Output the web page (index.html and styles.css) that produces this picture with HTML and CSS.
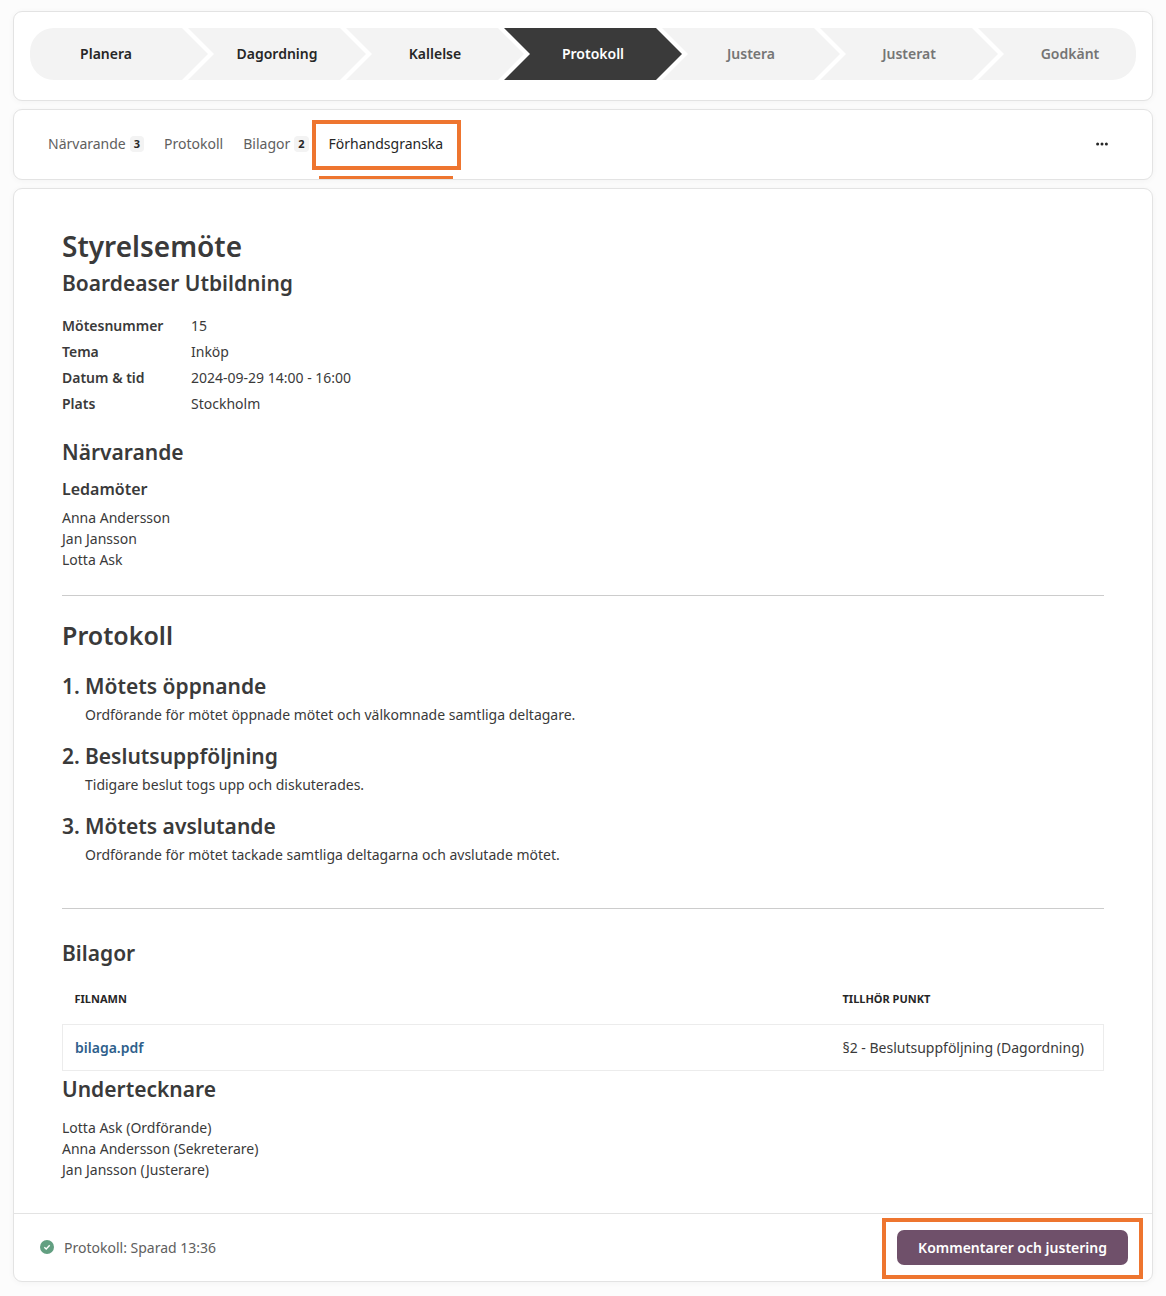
FILE: index.html
```html
<!DOCTYPE html>
<html lang="sv">
<head>
<meta charset="utf-8">
<meta name="viewport" content="width=device-width, initial-scale=1">
<title>Styrelsemöte – Protokoll</title>
<link rel="stylesheet" href="styles.css">
</head>
<body>
<div class="page">
  <nav class="card stepper" aria-label="Mötesprocess">
    <ol class="steps">
      <li class="step"><a href="#planera">Planera</a></li>
      <li class="step"><a href="#dagordning">Dagordning</a></li>
      <li class="step"><a href="#kallelse">Kallelse</a></li>
      <li class="step step-current" aria-current="step"><a href="#protokoll">Protokoll</a></li>
      <li class="step step-upcoming"><span>Justera</span></li>
      <li class="step step-upcoming"><span>Justerat</span></li>
      <li class="step step-upcoming"><span>Godkänt</span></li>
    </ol>
  </nav>

  <nav class="card tabs" aria-label="Protokoll">
    <a class="tab" href="#narvarande">Närvarande <span class="badge">3</span></a>
    <a class="tab" href="#protokoll">Protokoll</a>
    <a class="tab" href="#bilagor">Bilagor <span class="badge">2</span></a>
    <a class="tab tab-active" href="#forhandsgranska" aria-current="page">Förhandsgranska</a>
    <button class="more" type="button" aria-label="Fler val">
      <svg width="14" height="4" viewBox="0 0 14 4" fill="currentColor" aria-hidden="true">
        <circle cx="2.6" cy="2" r="1.5"/><circle cx="7" cy="2" r="1.5"/><circle cx="11.4" cy="2" r="1.5"/>
      </svg>
    </button>
  </nav>

  <main class="card">
    <article class="document">
      <h1 class="title">Styrelsemöte</h1>
      <p class="heading organisation">Boardeaser Utbildning</p>
      <dl class="facts">
        <dt>Mötesnummer</dt><dd>15</dd>
        <dt>Tema</dt><dd>Inköp</dd>
        <dt>Datum &amp; tid</dt><dd>2024-09-29 14:00 - 16:00</dd>
        <dt>Plats</dt><dd>Stockholm</dd>
      </dl>

      <section class="attendance" id="narvarande">
        <h2 class="heading">Närvarande</h2>
        <h3 class="subheading">Ledamöter</h3>
        <ul class="people">
          <li>Anna Andersson</li>
          <li>Jan Jansson</li>
          <li>Lotta Ask</li>
        </ul>
      </section>

      <section class="minutes" id="protokoll">
        <h2 class="minutes-title">Protokoll</h2>
        <ol class="items">
          <li class="item"><h3 class="item-title">Mötets öppnande</h3><p>Ordförande för mötet öppnade mötet och välkomnade samtliga deltagare.</p></li>
          <li class="item"><h3 class="item-title">Beslutsuppföljning</h3><p>Tidigare beslut togs upp och diskuterades.</p></li>
          <li class="item"><h3 class="item-title">Mötets avslutande</h3><p>Ordförande för mötet tackade samtliga deltagarna och avslutade mötet.</p></li>
        </ol>
      </section>

      <section class="attachments" id="bilagor">
        <h2 class="heading">Bilagor</h2>
        <table class="files">
          <thead><tr><th scope="col">Filnamn</th><th scope="col">Tillhör punkt</th></tr></thead>
          <tbody><tr><td><a href="#bilaga">bilaga.pdf</a></td><td>§2 - Beslutsuppföljning (Dagordning)</td></tr></tbody>
        </table>
      </section>

      <section class="signers">
        <h2 class="heading">Undertecknare</h2>
        <ul class="people">
          <li>Lotta Ask (Ordförande)</li>
          <li>Anna Andersson (Sekreterare)</li>
          <li>Jan Jansson (Justerare)</li>
        </ul>
      </section>
    </article>

    <footer class="footer">
      <p class="status">
        <svg width="14" height="14" viewBox="0 0 14 14" aria-hidden="true">
          <circle cx="7" cy="7" r="7" fill="#629f81"/>
          <path d="M4.3 7.200 6.200 9 9.700 5.300" fill="none" stroke="#fff" stroke-width="1.4"/>
        </svg>
        Protokoll: Sparad 13:36
      </p>
      <div class="action"><button class="primary" type="button">Kommentarer och justering</button></div>
    </footer>
  </main>
</div>
</body>
</html>
```
FILE: styles.css
```css
* { box-sizing: border-box; }

body {
  margin: 0;
  background: #fcfcfc;
  color: #3a3a3a;
  font: 14px/21px "Noto Sans", sans-serif;
}

h1, h2, h3, p, ol, ul, dl, dd { margin: 0; padding: 0; }
ol, ul { list-style: none; }
h1, h2, h3 { font-weight: 600; }
a { color: inherit; text-decoration: none; }
button { font: inherit; border: 0; cursor: pointer; }

.page {
  display: grid;
  gap: 8px;
  padding: 11px 13px 14px;
}

.card {
  min-width: 0;
  background: #fff;
  border: 1px solid #e3e3e3;
  border-radius: 9px;
  box-shadow: 0 1px 6px rgb(0 0 0 / 4%);
}

/* Process stepper */
.stepper { padding: 16px 16px 20px; }

.steps {
  display: grid;
  grid-template-columns: repeat(7, minmax(0, 1fr));
}

.step {
  height: 52px;
  margin-right: -20px;
  padding-bottom: 2px;
  display: flex;
  align-items: center;
  justify-content: center;
  background: #f3f3f3;
  color: #262626;
  font-weight: 600;
  clip-path: polygon(0 0, calc(100% - 26px) 0, 100% 50%, calc(100% - 26px) 100%, 0 100%, 26px 50%);
}

.step:first-child {
  padding-right: 26px;
  border-radius: 24px 0 0 24px;
  clip-path: polygon(0 0, calc(100% - 26px) 0, 100% 50%, calc(100% - 26px) 100%, 0 100%);
}

.step:last-child {
  margin-right: 0;
  padding-left: 26px;
  border-radius: 0 24px 24px 0;
  clip-path: polygon(0 0, 100% 0, 100% 100%, 0 100%, 26px 50%);
}

.step-current { background: #3a3a3a; color: #fff; }
.step-upcoming { color: #757575; }

/* Tabs */
.tabs {
  display: flex;
  min-height: 71px;
  padding: 0 39px 0 24px;
}

.tab {
  position: relative;
  display: flex;
  align-items: center;
  gap: 4px;
  padding: 0 10px 2px;
  color: #606060;
}

.tab-active { color: #262626; }

.tab-active::before {
  content: "";
  position: absolute;
  inset: 10px -8px 9px -7px;
  border: 4px solid #ee752f;
}

.tab-active::after {
  content: "";
  position: absolute;
  inset: auto 0 0;
  height: 3px;
  background: #ee752f;
}

.badge {
  padding: 0 4px;
  border-radius: 4px;
  background: #f3f3f3;
  color: #262626;
  font-size: 11px;
  font-weight: 700;
  line-height: 16px;
}

.more {
  align-self: center;
  display: flex;
  margin-left: auto;
  padding: 8px 4px 10px;
  background: none;
  color: #262626;
}

/* Minutes document */
.document { padding: 40px 48px 33px; }
.title { font-size: 28px; line-height: 34px; }
.heading { font-size: 21px; line-height: 40px; font-weight: 600; }
.subheading { margin: 5px 0 6px; font-size: 16px; line-height: 24px; }

.facts {
  display: grid;
  grid-template-columns: 129px 1fr;
  margin: 10px 0 15px;
  line-height: 26px;
}

.facts dt { font-weight: 600; }

.attendance { padding-bottom: 25px; }

.minutes {
  border: solid #cccccc;
  border-width: 1px 0;
  padding: 19px 0 43px;
}

.minutes-title { font-size: 25px; line-height: 40px; }

.items {
  display: grid;
  gap: 17px;
  margin-top: 17px;
  counter-reset: item;
}

.item {
  display: grid;
  grid-template-columns: 23px 1fr;
  row-gap: 4px;
  counter-increment: item;
}

.item::before {
  content: counter(item) ".";
  font-size: 21px;
  font-weight: 600;
  line-height: 28px;
}

.item-title { font-size: 21px; line-height: 28px; }
.item p { grid-column: 2; }

.attachments { padding-top: 24px; }

.files {
  width: 100%;
  border-collapse: collapse;
}

.files th {
  height: 51px;
  padding: 0 12px;
  color: #262626;
  font-size: 11px;
  font-weight: 700;
  text-align: left;
  text-transform: uppercase;
}

.files td { height: 46px; padding: 0 12px; }
.files th:last-child, .files td:last-child { width: 273px; white-space: nowrap; }
.files tbody tr { border: 1px solid #ececec; }
.files a { color: #2f5f8c; font-weight: 600; }

.signers .heading { margin: 2px 0 12px; line-height: 32px; }

/* Save status and primary action */
.footer {
  display: flex;
  align-items: center;
  justify-content: space-between;
  padding: 16px 24px;
  border-top: 1px solid #e3e3e3;
}

.status {
  display: flex;
  align-items: center;
  gap: 10px;
  padding-left: 2px;
  color: #606060;
}

.action { position: relative; }

.action::after {
  content: "";
  position: absolute;
  inset: -12px -15px -14px;
  border: 4px solid #ee752f;
  pointer-events: none;
}

.primary {
  display: block;
  padding: 7px 21px;
  border-radius: 7px;
  background: #6f506a;
  color: #fff;
  font-weight: 600;
}
```
